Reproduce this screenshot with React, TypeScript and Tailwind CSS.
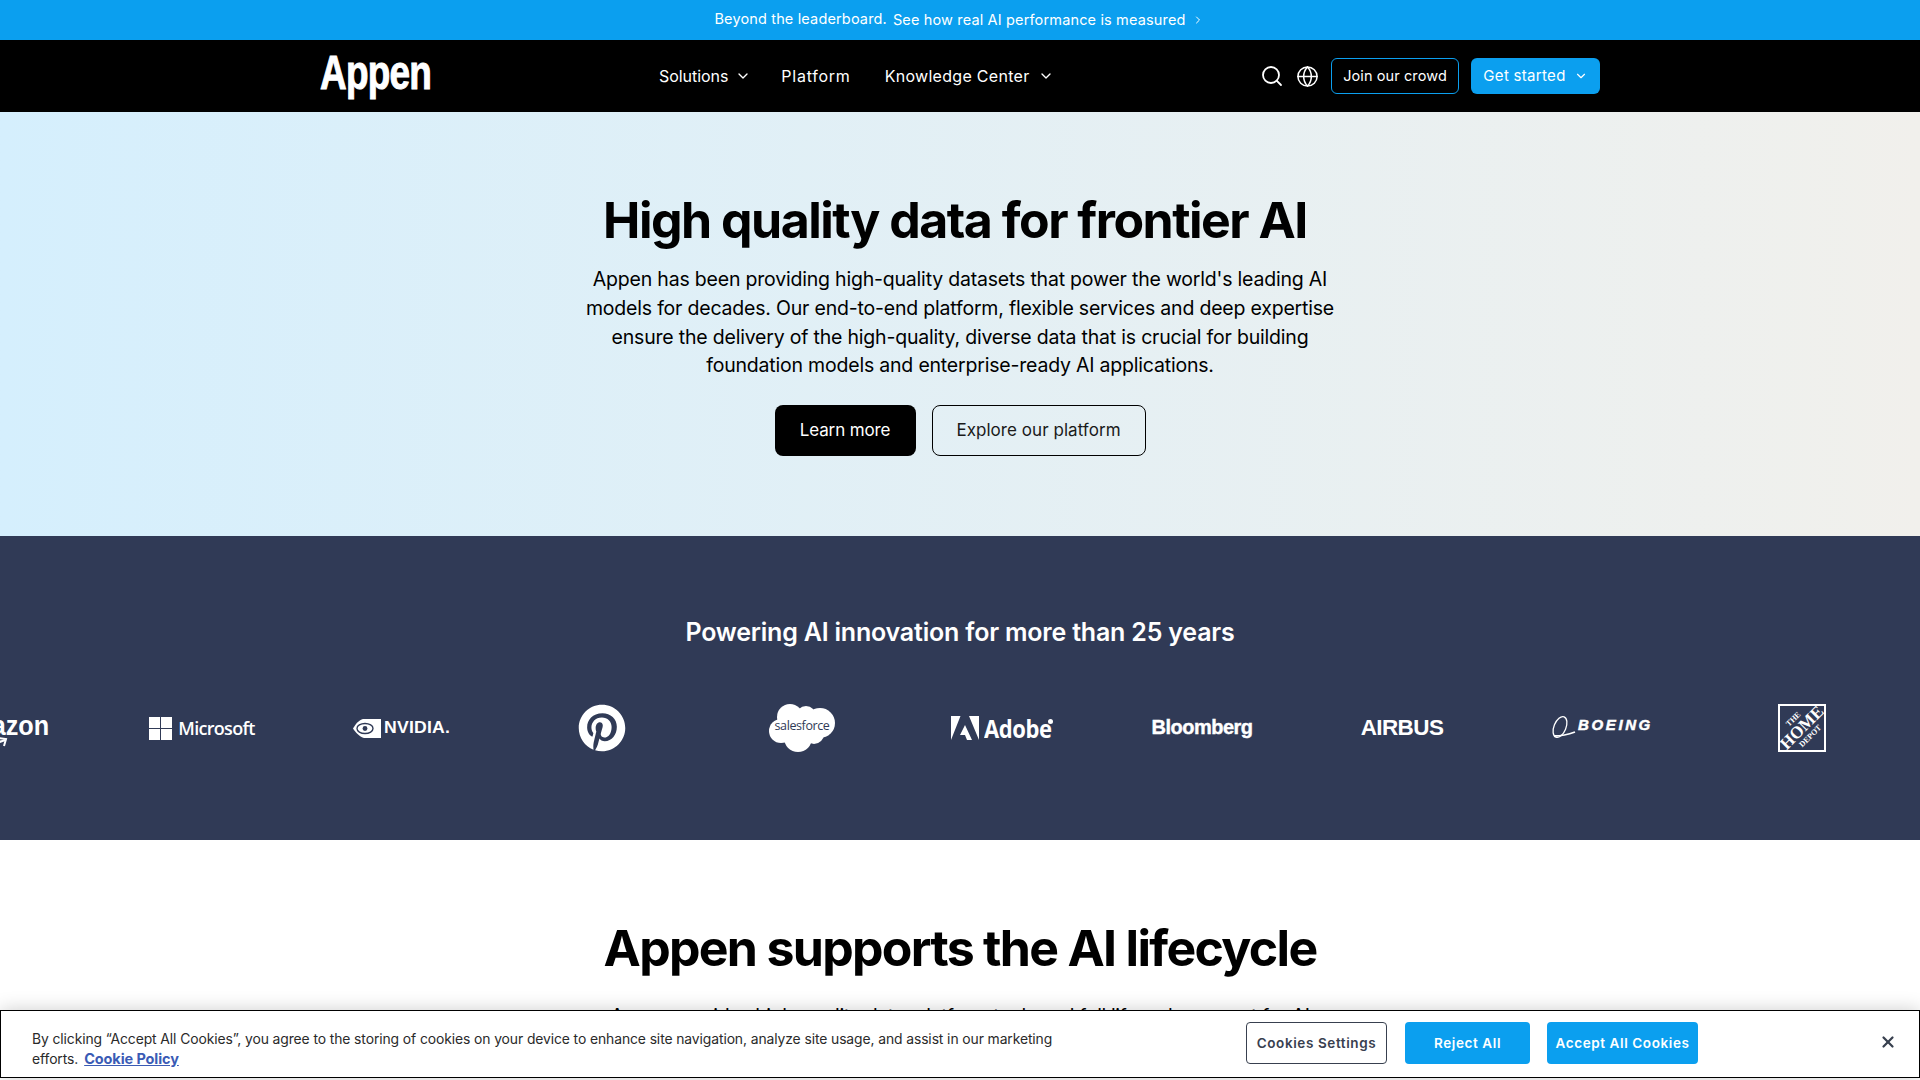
import React from "react";
import { Search, Globe, ChevronDown, ChevronRight, X } from "lucide-react";
import { FaPinterest } from "react-icons/fa";

const font = { fontFamily: "Inter, sans-serif" };

function Slot({ children }: { children: React.ReactNode }) {
  return <div className="flex h-12 w-[200px] shrink-0 items-center justify-center text-white">{children}</div>;
}

function Logos() {
  return (
    <div className="flex -ml-[98px] mt-[55px]">
      <Slot>
        <div className="relative -mt-[4px] font-['Liberation_Sans'] text-[28px] font-bold leading-none">
          <span className="inline-block origin-center scale-x-[0.9]">amazon</span>
          <svg className="absolute -bottom-[9px] left-[10px]" width="50" height="14" viewBox="0 0 50 14" fill="none">
            <path d="M1 2c12 9 30 9 44 3" stroke="white" strokeWidth="2.4" />
            <path d="M38 3l8 1-2 7" stroke="white" strokeWidth="2" />
          </svg>
        </div>
      </Slot>
      <Slot>
        <div className="flex items-center gap-[6px]">
          <div className="grid h-[23px] w-[23px] grid-cols-2 gap-[1px]">
            <div className="bg-white" />
            <div className="bg-white" />
            <div className="bg-white" />
            <div className="bg-white" />
          </div>
          <span className="font-['Open_Sans'] text-[18px] font-semibold tracking-[-0.7px]">Microsoft</span>
        </div>
      </Slot>
      <Slot>
        <div className="flex items-center gap-[3px]">
          <svg width="28" height="19" viewBox="0 0 28 19">
            <path d="M10 0h18v19H11c-4-1-8-5-11-9.500 3-5 6-8.500 10-9.500z" fill="white" />
            <ellipse cx="12" cy="9.500" rx="8" ry="5" fill="none" stroke="#303a56" strokeWidth="1.4" />
            <circle cx="12" cy="9.500" r="2.4" fill="#303a56" />
          </svg>
          <span className="inline-block origin-left scale-x-[1.1] pr-[6px] font-['Liberation_Sans'] text-[16px] font-bold tracking-[0.2px]">NVIDIA.</span>
        </div>
      </Slot>
      <Slot>
        <FaPinterest size={48} />
      </Slot>
      <Slot>
        <div className="relative flex h-12 w-[68px] items-center justify-center">
          <svg className="absolute inset-0" width="68" height="48" viewBox="0 0 68 48">
            <g fill="white">
              <circle cx="22" cy="13" r="13" />
              <circle cx="38" cy="12" r="10" />
              <circle cx="52" cy="19" r="15" />
              <circle cx="13" cy="27" r="12" />
              <circle cx="30" cy="34" r="14" />
              <circle cx="46" cy="30" r="10" />
            </g>
          </svg>
          <span className="relative -mt-[3px] font-['Open_Sans'] text-[12.500px] tracking-[-0.4px] text-[#303a56]">salesforce</span>
        </div>
      </Slot>
      <Slot>
        <div className="flex items-center gap-[5px]">
          <svg width="28" height="24" viewBox="0 0 28 24" fill="white">
            <path d="M0 0h9.500L0 24zM18 0h10v24zM14 9l7 15h-5l-2-5h-5z" />
          </svg>
          <span className="inline-block w-[60px] origin-left scale-x-[0.88] whitespace-nowrap font-['Open_Sans'] text-[25px] font-bold leading-none tracking-[-0.5px]">Adobe</span>
          <span className="-ml-[1px] -mt-[14px] h-[5px] w-[5px] rounded-full bg-white" />
        </div>
      </Slot>
      <Slot>
        <span className="-mt-[2px] font-['Liberation_Sans'] text-[20px] font-bold tracking-[-0.5px] [-webkit-text-stroke:0.4px_white]">Bloomberg</span>
      </Slot>
      <Slot>
        <span className="font-['Liberation_Sans'] text-[22.500px] font-bold tracking-[-0.6px]">AIRBUS</span>
      </Slot>
      <Slot>
        <div className="flex items-center gap-[1px]">
          <svg width="26" height="28" viewBox="0 0 26 28" fill="none" stroke="white" strokeWidth="1.3">
            <ellipse cx="9" cy="13" rx="6" ry="11" transform="rotate(22 9 13)" />
            <path d="M3 22c6 0 13-1 21-4" strokeWidth="1.800" />
          </svg>
          <span className="-mt-[6px] font-['Liberation_Sans'] text-[15px] font-bold italic tracking-[2.6px] [-webkit-text-stroke:0.5px_white]">BOEING</span>
        </div>
      </Slot>
      <Slot>
        <div className="flex h-12 w-12 items-center justify-center border-2 border-white">
          <div className="flex -rotate-45 flex-col items-center font-['Liberation_Serif'] font-bold leading-[0.95]">
            <span className="text-[8px]">THE</span>
            <span className="text-[17px]">HOME</span>
            <span className="text-[8px]">DEPOT</span>
          </div>
        </div>
      </Slot>
    </div>
  );
}

export default function App() {
  return (
    <div style={font} className="relative h-screen overflow-hidden bg-white text-black">
      <div className="flex h-10 items-center justify-center bg-[#0b9fef] pr-[2px] text-[14.5px] tracking-[0.15px] text-white">
        <span className="-mt-[2px]">Beyond the leaderboard.</span>
        <span className="ml-[6px]">See how real AI performance is measured</span>
        <ChevronRight className="ml-[6px]" size={12} />
      </div>

      <header className="flex h-[72px] items-center bg-black pl-[320px] text-white">
        <div className="-mt-[6px] w-[339px]">
          <span className="inline-block origin-left scale-x-[0.77] whitespace-nowrap font-['Liberation_Sans'] text-[48px] font-bold leading-none tracking-[-1px] [-webkit-text-stroke:1px_white]">Appen</span>
        </div>
        <nav className="flex w-[609px] items-center text-[16px]">
          <span className="tracking-[-0.05px]">Solutions</span>
          <ChevronDown className="ml-[7px]" size={16} />
          <span className="ml-[30px] tracking-[0.75px]">Platform</span>
          <span className="ml-[34px] tracking-[0.3px]">Knowledge Center</span>
          <ChevronDown className="ml-[8px]" size={16} />
        </nav>
        <div className="-ml-[8px] flex items-center">
          <Search size={24} strokeWidth={1.8} />
          <Globe className="ml-[12px]" size={23} strokeWidth={1.6} />
          <div className="ml-[12px] flex h-9 w-[128px] items-center justify-center rounded-md border border-[#0b9fef] text-[14.5px] tracking-[0.1px]">Join our crowd</div>
          <div className="ml-3 flex h-9 w-[129px] items-center justify-center gap-[8px] rounded-md bg-[#0b9fef] text-[15px] tracking-[0.3px]">
            Get started
            <ChevronDown size={14} />
          </div>
        </div>
      </header>

      <section className="flex h-[424px] flex-col items-center bg-gradient-to-r from-[#d5effd] to-[#f1f0ec] pt-[78px]">
        <h1 className="pr-[10px] text-[50px] font-bold leading-[60px] tracking-[-1.5px]">High quality data for frontier AI</h1>
        <p className="mt-[15px] w-[760px] text-center text-[19.5px] leading-[28.8px] tracking-[-0.2px]">
          Appen has been providing high-quality datasets that power the world's leading AI models for decades. Our end-to-end platform, flexible services and deep expertise ensure the delivery of the high-quality, diverse data that is crucial for building foundation models and enterprise-ready AI applications.
        </p>
        <div className="mt-[25px] flex gap-4">
          <div className="flex h-[51px] w-[141px] items-center justify-center rounded-lg bg-black text-[17px] tracking-[-0.15px] text-white">Learn more</div>
          <div className="flex h-[51px] w-[214px] items-center justify-center rounded-lg border border-black text-[17px] tracking-[0.05px] text-[#1a1a1a]">Explore our platform</div>
        </div>
      </section>

      <section className="h-[304px] overflow-hidden bg-[#303a56] pt-[79px]">
        <h2 className="text-center text-[25px] font-semibold leading-[34px] tracking-[-0.2px] text-white">Powering AI innovation for more than 25 years</h2>
        <Logos />
      </section>

      <section className="flex flex-col items-center pt-[78px]">
        <h2 className="text-[50px] font-bold leading-[60px] tracking-[-1.7px]">Appen supports the AI lifecycle</h2>
        <p className="mt-[24px] text-[19.5px] tracking-[-0.4px]">Appen provides high-quality data, platform tools and full lifecycle support for AI</p>
      </section>

      <div className="absolute bottom-[2px] left-0 right-0 flex h-[68px] items-center border-[1.5px] border-black bg-white shadow-[0_0_18px_rgba(0,0,0,0.2)]">
        <div className="ml-[31px] mt-[10px] w-[1040px] text-[13.900px] leading-[20px] tracking-[-0.1px] text-[#2a2a2a]">
          By clicking “Accept All Cookies”, you agree to the storing of cookies on your device to enhance site navigation, analyze site usage, and assist in our marketing efforts.
          <span className="ml-[6px] text-[14.500px] font-bold text-[#3a5bb5] underline">Cookie Policy</span>
        </div>
        <div className="mb-[2px] ml-[174px] flex h-[42px] w-[141px] items-center justify-center rounded-sm border border-[#38404f] text-[13.5px] font-semibold tracking-[0.6px] text-[#38404f]">Cookies Settings</div>
        <div className="mb-[2px] ml-[18px] flex h-[42px] w-[125px] items-center justify-center rounded-sm bg-[#0b9fef] text-[13.5px] font-semibold tracking-[0.6px] text-white">Reject All</div>
        <div className="mb-[2px] ml-[17px] flex h-[42px] w-[151px] items-center justify-center rounded-sm bg-[#0b9fef] text-[13.5px] font-semibold tracking-[0.6px] text-white">Accept All Cookies</div>
        <X className="mb-[4px] ml-[181px] text-[#38404f]" size={18} strokeWidth={3} />
      </div>
    </div>
  );
}
